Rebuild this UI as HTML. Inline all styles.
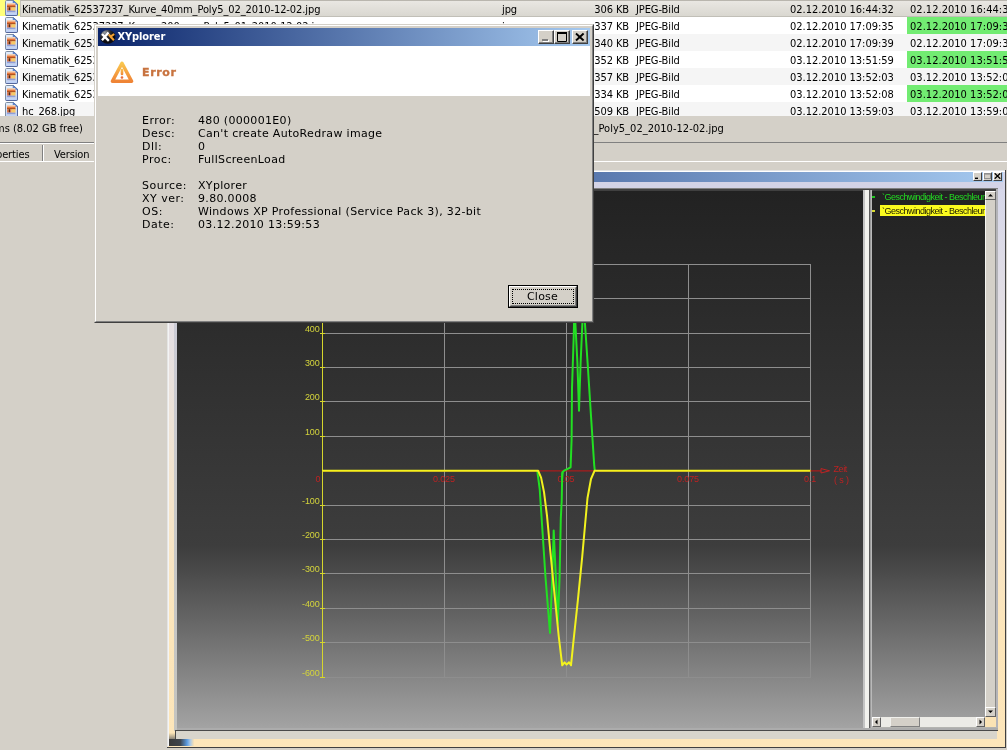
<!DOCTYPE html>
<html lang="en">
<head>
<meta charset="utf-8">
<title>XYplorer Error</title>
<style>
*{box-sizing:border-box;margin:0;padding:0}
html,body{width:1007px;height:750px;overflow:hidden}
body{background:#d4d0c8;font-family:"DejaVu Sans Condensed","Liberation Sans",sans-serif;letter-spacing:-0.13px;font-size:11px;color:#000;position:relative}
#root{position:absolute;left:0;top:0;width:1007px;height:750px;overflow:hidden;will-change:transform;background:#d4d0c8}
.abs{position:absolute}
/* ---------- file list ---------- */
#list{position:absolute;left:0;top:0;width:1007px;height:116px;background:#fff;overflow:hidden}
.row{position:absolute;left:0;width:1007px;height:17px;line-height:17px;white-space:nowrap}
.row.alt{background:linear-gradient(90deg,#fff 20px,#f5f5f5 20px)}
.row span{position:absolute;top:1px;height:17px;line-height:17px;font-size:11px;letter-spacing:-0.09px}
.row .ico{position:absolute;left:5px;top:0;width:13px;height:16px}
.c-name{left:22px}
.k{font-weight:normal;letter-spacing:-0.27px}
.c-ext{left:502px}
.c-size{left:560px;width:69px;text-align:right}
.c-type{left:636px}
.c-d1{left:790px;letter-spacing:-0.02px !important}
.c-d2{left:910px;letter-spacing:0.03px !important}
.grn{position:absolute;left:907px;top:0;width:100px;height:17px;background:#72ec72}
#sel{position:absolute;left:20px;top:0;width:987px;height:17px;background:linear-gradient(180deg,#e9e7e2,#d9d7d0);border-top:1px solid #b9b6ae;border-bottom:1px solid #c1bfb7;border-left:1px solid #c6c4bc}
#ymark{position:absolute;left:0;top:0;width:20px;height:16px;background:#ffff7a}
/* ---------- status / tabs ---------- */
.lbl{position:absolute;font-size:11px;line-height:13px;white-space:nowrap}
/* ---------- dialog ---------- */
#dlg{position:absolute;left:94px;top:24px;width:500px;height:299px;background:#d4d0c8;
 border:1px solid;border-color:#d4d0c8 #404040 #404040 #d4d0c8}
#dlg .in{position:absolute;left:0;top:0;right:0;bottom:0;border:1px solid;border-color:#fff #808080 #808080 #fff}
#ttl{position:absolute;left:3px;top:3px;width:492px;height:18px;background:linear-gradient(90deg,#0a246a 0%,#a6caf0 100%)}
#ttl .t{position:absolute;letter-spacing:-0.1px;left:19.5px;top:0;line-height:18px;color:#fff;font-weight:bold;font-size:11px}
.wb{position:absolute;top:2px;width:16px;height:14px;background:#d4d0c8;border:1px solid;border-color:#fff #404040 #404040 #fff;box-shadow:inset -1px -1px 0 #808080}
#hdr{position:absolute;left:3px;top:21px;width:492px;height:50px;background:#fff}
#hdr .e{position:absolute;letter-spacing:0.65px;-webkit-text-stroke:0.35px #c8733f;left:44px;top:20px;font-family:"DejaVu Sans","Liberation Sans",sans-serif;font-weight:bold;font-size:11px;line-height:13px;color:#c8733f}
.dt{position:absolute;font-family:"DejaVu Sans","Liberation Sans",sans-serif;font-size:11px;line-height:13px;white-space:nowrap;color:#000;letter-spacing:0.32px}
#btn{position:absolute;left:413px;top:260px;width:70px;height:23px;border:1px solid #000;background:#d4d0c8}
#btn .b1{position:absolute;left:0;top:0;right:0;bottom:0;border:1px solid;border-color:#fff #404040 #404040 #fff}
#btn .b2{position:absolute;left:1px;top:1px;right:1px;bottom:1px;border:1px solid;border-color:#d4d0c8 #808080 #808080 #d4d0c8}
#btn .f{position:absolute;left:3px;top:3px;right:3px;bottom:3px;border:1px dotted #000}
#btn .tx{position:absolute;left:0;right:1px;top:4px;letter-spacing:0.25px;text-align:center;font-family:"DejaVu Sans","Liberation Sans",sans-serif;font-size:11px;line-height:13px}
/* ---------- chart window ---------- */
#cw{position:absolute;left:167px;top:170px;width:839px;height:578px;background:linear-gradient(180deg,#d4d6ea 0%,#e6e0e2 30%,#f4e4cc 55%,#fce5b9 80%,#fde6ba 100%)}
#cttl{position:absolute;left:4px;top:2px;width:832px;height:10px;background:linear-gradient(90deg,#0a246a 0%,#a6caf0 100%)}
.cwb{position:absolute;top:2px;width:9px;height:9px;background:#d4d0c8;border:1px solid;border-color:#fff #404040 #404040 #fff;line-height:0}
.cwb svg{display:block}
.grad{background:linear-gradient(180deg,#222222 0px,#2c2c2c 130px,#383838 290px,#3d3d3d 355px,#474747 375px,#a3a3a3 537px)}
.lg{position:absolute;width:103px;overflow:hidden;white-space:nowrap;font-family:"Liberation Sans",sans-serif;font-size:9px;line-height:11px;letter-spacing:-0.5px}
.sb{position:absolute;background:#d4d0c8;border:1px solid;border-color:#fff #606060 #606060 #fff;line-height:0}
.sb svg{display:block}
</style>
</head>
<body>
<div id="root">

<!-- ================= FILE LIST ================= -->
<svg width="0" height="0" style="position:absolute"><defs>
<linearGradient id="pg" x1="0" y1="0" x2="0" y2="1"><stop offset="0" stop-color="#e4effd"/><stop offset="1" stop-color="#bccff5"/></linearGradient></defs></svg>
<div id="list">
<div class="row" style="top:0px"><div id="ymark"></div><div id="sel"></div><svg class="ico" viewBox="0 0 13 16"><path d="M0.5 1.6 Q0.5 0.5 1.6 0.5 H8.4 L12.5 4.2 V14.4 Q12.5 15.5 11.4 15.5 H1.6 Q0.5 15.5 0.5 14.4 Z" fill="url(#pg)" stroke="#7d8da2" stroke-width="1"/><path d="M12.5 4.2 V14.4 Q12.5 15.5 11.4 15.5 H1.6 Q0.9 15.5 0.6 15" fill="none" stroke="#55679c" stroke-width="1"/><path d="M8.2 0.6 V4.3 H12.4 Z" fill="#5f8edb" stroke="#4a6cb4" stroke-width="0.7"/><rect x="2" y="3" width="8.4" height="9.2" fill="#f3d2b6"/><rect x="2" y="4.6" width="8.4" height="2.6" fill="#e8763a"/><rect x="2" y="6.4" width="8.4" height="0.9" fill="#8c3c12"/><rect x="2" y="7.3" width="4.4" height="3.4" fill="#d97a52"/><rect x="6.4" y="7.3" width="4" height="3.4" fill="#f8c964"/><rect x="3.8" y="7.3" width="1.1" height="3" fill="#3c2212"/><rect x="2" y="10.6" width="8.4" height="1.6" fill="#8d9edb"/></svg><span class="c-name"><b class="k">Kinematik_</b>62537237_Kurve_40mm_Poly5_02_2010-12-02.jpg</span><span class="c-ext">jpg</span><span class="c-size">306 KB</span><span class="c-type">JPEG-Bild</span><span class="c-d1">02.12.2010 16:44:32</span><span class="c-d2">02.12.2010 16:44:32</span></div>
<div class="row" style="top:17px"><div class="grn"></div><svg class="ico" viewBox="0 0 13 16"><path d="M0.5 1.6 Q0.5 0.5 1.6 0.5 H8.4 L12.5 4.2 V14.4 Q12.5 15.5 11.4 15.5 H1.6 Q0.5 15.5 0.5 14.4 Z" fill="url(#pg)" stroke="#7d8da2" stroke-width="1"/><path d="M12.5 4.2 V14.4 Q12.5 15.5 11.4 15.5 H1.6 Q0.9 15.5 0.6 15" fill="none" stroke="#55679c" stroke-width="1"/><path d="M8.2 0.6 V4.3 H12.4 Z" fill="#5f8edb" stroke="#4a6cb4" stroke-width="0.7"/><rect x="2" y="3" width="8.4" height="9.2" fill="#f3d2b6"/><rect x="2" y="4.6" width="8.4" height="2.6" fill="#e8763a"/><rect x="2" y="6.4" width="8.4" height="0.9" fill="#8c3c12"/><rect x="2" y="7.3" width="4.4" height="3.4" fill="#d97a52"/><rect x="6.4" y="7.3" width="4" height="3.4" fill="#f8c964"/><rect x="3.8" y="7.3" width="1.1" height="3" fill="#3c2212"/><rect x="2" y="10.6" width="8.4" height="1.6" fill="#8d9edb"/></svg><span class="c-name"><b class="k">Kinematik_</b>62537237_Kurve_200mm_Poly5_01_2010-12-02.jpg</span><span class="c-ext">jpg</span><span class="c-size">337 KB</span><span class="c-type">JPEG-Bild</span><span class="c-d1">02.12.2010 17:09:35</span><span class="c-d2">02.12.2010 17:09:35</span></div>
<div class="row alt" style="top:34px"><svg class="ico" viewBox="0 0 13 16"><path d="M0.5 1.6 Q0.5 0.5 1.6 0.5 H8.4 L12.5 4.2 V14.4 Q12.5 15.5 11.4 15.5 H1.6 Q0.5 15.5 0.5 14.4 Z" fill="url(#pg)" stroke="#7d8da2" stroke-width="1"/><path d="M12.5 4.2 V14.4 Q12.5 15.5 11.4 15.5 H1.6 Q0.9 15.5 0.6 15" fill="none" stroke="#55679c" stroke-width="1"/><path d="M8.2 0.6 V4.3 H12.4 Z" fill="#5f8edb" stroke="#4a6cb4" stroke-width="0.7"/><rect x="2" y="3" width="8.4" height="9.2" fill="#f3d2b6"/><rect x="2" y="4.6" width="8.4" height="2.6" fill="#e8763a"/><rect x="2" y="6.4" width="8.4" height="0.9" fill="#8c3c12"/><rect x="2" y="7.3" width="4.4" height="3.4" fill="#d97a52"/><rect x="6.4" y="7.3" width="4" height="3.4" fill="#f8c964"/><rect x="3.8" y="7.3" width="1.1" height="3" fill="#3c2212"/><rect x="2" y="10.6" width="8.4" height="1.6" fill="#8d9edb"/></svg><span class="c-name"><b class="k">Kinematik_</b>62537237_Kurve_200mm_Poly5_02_2010-12-02.jpg</span><span class="c-ext">jpg</span><span class="c-size">340 KB</span><span class="c-type">JPEG-Bild</span><span class="c-d1">02.12.2010 17:09:39</span><span class="c-d2">02.12.2010 17:09:39</span></div>
<div class="row" style="top:51px"><div class="grn"></div><svg class="ico" viewBox="0 0 13 16"><path d="M0.5 1.6 Q0.5 0.5 1.6 0.5 H8.4 L12.5 4.2 V14.4 Q12.5 15.5 11.4 15.5 H1.6 Q0.5 15.5 0.5 14.4 Z" fill="url(#pg)" stroke="#7d8da2" stroke-width="1"/><path d="M12.5 4.2 V14.4 Q12.5 15.5 11.4 15.5 H1.6 Q0.9 15.5 0.6 15" fill="none" stroke="#55679c" stroke-width="1"/><path d="M8.2 0.6 V4.3 H12.4 Z" fill="#5f8edb" stroke="#4a6cb4" stroke-width="0.7"/><rect x="2" y="3" width="8.4" height="9.2" fill="#f3d2b6"/><rect x="2" y="4.6" width="8.4" height="2.6" fill="#e8763a"/><rect x="2" y="6.4" width="8.4" height="0.9" fill="#8c3c12"/><rect x="2" y="7.3" width="4.4" height="3.4" fill="#d97a52"/><rect x="6.4" y="7.3" width="4" height="3.4" fill="#f8c964"/><rect x="3.8" y="7.3" width="1.1" height="3" fill="#3c2212"/><rect x="2" y="10.6" width="8.4" height="1.6" fill="#8d9edb"/></svg><span class="c-name"><b class="k">Kinematik_</b>62537237_Kurve_200mm_Poly5_03_2010-12-03.jpg</span><span class="c-ext">jpg</span><span class="c-size">352 KB</span><span class="c-type">JPEG-Bild</span><span class="c-d1">03.12.2010 13:51:59</span><span class="c-d2">03.12.2010 13:51:59</span></div>
<div class="row alt" style="top:68px"><svg class="ico" viewBox="0 0 13 16"><path d="M0.5 1.6 Q0.5 0.5 1.6 0.5 H8.4 L12.5 4.2 V14.4 Q12.5 15.5 11.4 15.5 H1.6 Q0.5 15.5 0.5 14.4 Z" fill="url(#pg)" stroke="#7d8da2" stroke-width="1"/><path d="M12.5 4.2 V14.4 Q12.5 15.5 11.4 15.5 H1.6 Q0.9 15.5 0.6 15" fill="none" stroke="#55679c" stroke-width="1"/><path d="M8.2 0.6 V4.3 H12.4 Z" fill="#5f8edb" stroke="#4a6cb4" stroke-width="0.7"/><rect x="2" y="3" width="8.4" height="9.2" fill="#f3d2b6"/><rect x="2" y="4.6" width="8.4" height="2.6" fill="#e8763a"/><rect x="2" y="6.4" width="8.4" height="0.9" fill="#8c3c12"/><rect x="2" y="7.3" width="4.4" height="3.4" fill="#d97a52"/><rect x="6.4" y="7.3" width="4" height="3.4" fill="#f8c964"/><rect x="3.8" y="7.3" width="1.1" height="3" fill="#3c2212"/><rect x="2" y="10.6" width="8.4" height="1.6" fill="#8d9edb"/></svg><span class="c-name"><b class="k">Kinematik_</b>62537237_Kurve_200mm_Poly5_04_2010-12-03.jpg</span><span class="c-ext">jpg</span><span class="c-size">357 KB</span><span class="c-type">JPEG-Bild</span><span class="c-d1">03.12.2010 13:52:03</span><span class="c-d2">03.12.2010 13:52:03</span></div>
<div class="row" style="top:85px"><div class="grn"></div><svg class="ico" viewBox="0 0 13 16"><path d="M0.5 1.6 Q0.5 0.5 1.6 0.5 H8.4 L12.5 4.2 V14.4 Q12.5 15.5 11.4 15.5 H1.6 Q0.5 15.5 0.5 14.4 Z" fill="url(#pg)" stroke="#7d8da2" stroke-width="1"/><path d="M12.5 4.2 V14.4 Q12.5 15.5 11.4 15.5 H1.6 Q0.9 15.5 0.6 15" fill="none" stroke="#55679c" stroke-width="1"/><path d="M8.2 0.6 V4.3 H12.4 Z" fill="#5f8edb" stroke="#4a6cb4" stroke-width="0.7"/><rect x="2" y="3" width="8.4" height="9.2" fill="#f3d2b6"/><rect x="2" y="4.6" width="8.4" height="2.6" fill="#e8763a"/><rect x="2" y="6.4" width="8.4" height="0.9" fill="#8c3c12"/><rect x="2" y="7.3" width="4.4" height="3.4" fill="#d97a52"/><rect x="6.4" y="7.3" width="4" height="3.4" fill="#f8c964"/><rect x="3.8" y="7.3" width="1.1" height="3" fill="#3c2212"/><rect x="2" y="10.6" width="8.4" height="1.6" fill="#8d9edb"/></svg><span class="c-name"><b class="k">Kinematik_</b>62537237_Kurve_200mm_Poly5_05_2010-12-03.jpg</span><span class="c-ext">jpg</span><span class="c-size">334 KB</span><span class="c-type">JPEG-Bild</span><span class="c-d1">03.12.2010 13:52:08</span><span class="c-d2">03.12.2010 13:52:08</span></div>
<div class="row alt" style="top:102px"><svg class="ico" viewBox="0 0 13 16"><path d="M0.5 1.6 Q0.5 0.5 1.6 0.5 H8.4 L12.5 4.2 V14.4 Q12.5 15.5 11.4 15.5 H1.6 Q0.5 15.5 0.5 14.4 Z" fill="url(#pg)" stroke="#7d8da2" stroke-width="1"/><path d="M12.5 4.2 V14.4 Q12.5 15.5 11.4 15.5 H1.6 Q0.9 15.5 0.6 15" fill="none" stroke="#55679c" stroke-width="1"/><path d="M8.2 0.6 V4.3 H12.4 Z" fill="#5f8edb" stroke="#4a6cb4" stroke-width="0.7"/><rect x="2" y="3" width="8.4" height="9.2" fill="#f3d2b6"/><rect x="2" y="4.6" width="8.4" height="2.6" fill="#e8763a"/><rect x="2" y="6.4" width="8.4" height="0.9" fill="#8c3c12"/><rect x="2" y="7.3" width="4.4" height="3.4" fill="#d97a52"/><rect x="6.4" y="7.3" width="4" height="3.4" fill="#f8c964"/><rect x="3.8" y="7.3" width="1.1" height="3" fill="#3c2212"/><rect x="2" y="10.6" width="8.4" height="1.6" fill="#8d9edb"/></svg><span class="c-name">hc_268.jpg</span><span class="c-ext">jpg</span><span class="c-size">509 KB</span><span class="c-type">JPEG-Bild</span><span class="c-d1">03.12.2010 13:59:03</span><span class="c-d2">03.12.2010 13:59:03</span></div>
</div>

<!-- ================= STATUS / TABS ================= -->
<div class="lbl" style="left:-5px;top:122px;letter-spacing:0">ms (8.02 GB free)</div>
<div class="lbl" style="left:593.5px;top:122px;letter-spacing:0.02px">_Poly5_02_2010-12-02.jpg</div>
<div class="abs" style="left:0;top:142px;width:1007px;height:1px;background:#808080"></div>
<div class="abs" style="left:0;top:143px;width:94px;height:1px;background:#fff"></div>
<div class="abs" style="left:0;top:161px;width:1007px;height:1px;background:#fff"></div>
<div class="abs" style="left:42px;top:145px;width:1px;height:16px;background:#808080"></div>
<div class="abs" style="left:43px;top:145px;width:1px;height:16px;background:#fff"></div>
<div class="lbl" style="left:-4px;top:148px">perties</div>
<div class="lbl" style="left:54px;top:148px">Version</div>

<!-- ================= CHART WINDOW ================= -->
<div id="cw">
  <div class="abs" style="left:0;top:0;width:839px;height:1px;background:#e4e4e4"></div>
  <div class="abs" style="left:0;top:0;width:1px;height:578px;background:#e4e4e4"></div>
  <div class="abs" style="left:1px;top:1px;width:837px;height:1px;background:#fff"></div>
  <div class="abs" style="left:1px;top:1px;width:1px;height:575px;background:#f4f4f4"></div>
  <div class="abs" style="right:0;top:0;width:1px;height:578px;background:#404040"></div>
  <div class="abs" style="left:0;bottom:0;width:839px;height:1px;background:#404040"></div>
  <div class="abs" style="left:7px;top:0;width:3px;height:561px;background:linear-gradient(180deg,#d0d0e2,#c8c8c8 60%,#c4c4c0)"></div>
  <div id="cttl"></div>
  <div class="cwb" style="left:806px"><svg width="7" height="6" viewBox="0 0 7 6"><rect x="1" y="4.6" width="3" height="1.4" fill="#000"/></svg></div>
  <div class="cwb" style="left:816px"><svg width="7" height="6" viewBox="0 0 7 6"><rect x="0.5" y="0.5" width="6" height="5" fill="none" stroke="#909090"/><rect x="0" y="0" width="7" height="1.6" fill="#909090"/></svg></div>
  <div class="cwb" style="left:826px"><svg width="7" height="6" viewBox="0 0 7 6"><path d="M0.7 0.3 L6.3 5.7 M6.3 0.3 L0.7 5.7" stroke="#000" stroke-width="1.3"/></svg></div>
  <div class="abs" style="left:4px;top:12px;width:832px;height:7px;background:#d3d3e6"></div>
  <div class="abs" style="left:8px;top:18px;width:823px;height:1px;background:#808080"></div>
  <div class="abs" style="left:9px;top:19px;width:822px;height:2px;background:#404040"></div>
</div>
<!-- plot + legend backgrounds (absolute page coords) -->
<div class="abs grad" style="left:177px;top:191px;width:686px;height:538px"></div>
<div class="abs" style="left:863px;top:190px;width:2px;height:539px;background:#c4c4c4"></div>
<div class="abs" style="left:865px;top:190px;width:4px;height:539px;background:#f2f2ee"></div>
<div class="abs" style="left:869px;top:190px;width:1px;height:539px;background:#5c5c5c"></div>
<div class="abs" style="left:870px;top:190px;width:2px;height:539px;background:linear-gradient(90deg,#8c8c8c,#c8c8c8)"></div>
<div class="abs grad" style="left:872px;top:191px;width:113px;height:537px"></div>
<!-- legend -->
<div class="abs" style="left:872px;top:196px;width:3px;height:2px;background:#20c820"></div>
<div class="abs" style="left:872px;top:210px;width:3px;height:2px;background:#d8d830"></div>
<div class="abs" style="left:880px;top:205px;width:105px;height:11px;background:#fbfb1e"></div>
<div class="lg" style="left:882px;top:192px;color:#22d822">`Geschwindigkeit - Beschleunigung</div>
<div class="lg" style="left:882px;top:206px;color:#202000">`Geschwindigkeit - Beschleunigung</div>
<!-- v scrollbar -->
<div class="abs" style="left:985px;top:191px;width:11px;height:526px;background:#d4d0c8;border-left:1px solid #f4f4f0"></div>
<div class="sb" style="left:985px;top:191px;width:11px;height:9px"><svg width="9" height="7" viewBox="0 0 9 7"><path d="M2 4.5 L4.5 2 L7 4.5 Z" fill="#000"/></svg></div>
<div class="sb" style="left:985px;top:707px;width:11px;height:10px"><svg width="9" height="8" viewBox="0 0 9 8"><path d="M2 2.5 L4.5 5 L7 2.5 Z" fill="#000"/></svg></div>
<!-- h scrollbar -->
<div class="abs" style="left:872px;top:717px;width:124px;height:11px;background:#b4b4b0"></div><div class="abs" style="left:872px;top:717px;width:113px;height:10px;background:#ecebe6"></div>
<div class="sb" style="left:872px;top:717px;width:9px;height:10px"><svg width="7" height="8" viewBox="0 0 7 8"><path d="M4.5 1.5 L2 4 L4.5 6.5 Z" fill="#000"/></svg></div>
<div class="sb" style="left:976px;top:717px;width:9px;height:10px"><svg width="7" height="8" viewBox="0 0 7 8"><path d="M2.5 1.5 L5 4 L2.5 6.5 Z" fill="#000"/></svg></div>
<div class="abs" style="left:890px;top:717px;width:30px;height:10px;background:#d4d0c8;border:1px solid;border-color:#f0f0ec #808080 #808080 #f0f0ec"></div>
<div class="abs" style="left:985px;top:717px;width:11px;height:10px;background:#fbe3b4"></div>
<div class="abs" style="left:995px;top:200px;width:1px;height:507px;background:#8a8a88"></div><div class="abs" style="left:996px;top:189px;width:2px;height:541px;background:#b4b4b8"></div>
<!-- bottom -->
<div class="abs" style="left:177px;top:728px;width:821px;height:2px;background:#acacac"></div>
<div class="abs" style="left:175px;top:730px;width:823px;height:1px;background:#4a4a4a"></div>
<div class="abs" style="left:175px;top:730px;width:1px;height:9px;background:#4a4a4a"></div>
<div class="abs" style="left:176px;top:731px;width:821px;height:8px;background:#d8d5cc"></div>
<div class="abs" style="left:169px;top:739px;width:25px;height:7px;background:linear-gradient(90deg,#3a3a3a 0%,#3e444c 45%,#5b9be0 72%,#a8c8e8 85%,#fbe2b2 100%)"></div>
<div class="abs" style="left:169px;top:733px;width:6px;height:6px;background:linear-gradient(180deg,#fbe4b6,#8a8478)"></div>
<svg class="abs" style="left:177px;top:191px" width="686" height="537" viewBox="0 0 686 537" font-family="'Liberation Sans',sans-serif" font-size="9">
 <g stroke="#8e8e8e" stroke-width="1" shape-rendering="crispEdges"><line x1="145" y1="486.5" x2="634" y2="486.5"/><line x1="145" y1="451.5" x2="634" y2="451.5"/><line x1="145" y1="417.5" x2="634" y2="417.5"/><line x1="145" y1="382.5" x2="634" y2="382.5"/><line x1="145" y1="348.5" x2="634" y2="348.5"/><line x1="145" y1="314.5" x2="634" y2="314.5"/><line x1="145" y1="245.5" x2="634" y2="245.5"/><line x1="145" y1="210.5" x2="634" y2="210.5"/><line x1="145" y1="176.5" x2="634" y2="176.5"/><line x1="145" y1="142.5" x2="634" y2="142.5"/><line x1="145" y1="107.5" x2="634" y2="107.5"/><line x1="145" y1="73.5" x2="634" y2="73.5"/><line x1="267.5" y1="73" x2="267.5" y2="486"/><line x1="389.5" y1="73" x2="389.5" y2="486"/><line x1="511.5" y1="73" x2="511.5" y2="486"/><line x1="633.5" y1="73" x2="633.5" y2="486"/></g>
 <line x1="145.5" y1="73" x2="145.5" y2="486" stroke="#d6d62c" stroke-width="1" shape-rendering="crispEdges"/>
 <g fill="#d4d43c"><text x="142.6" y="72.2" text-anchor="end">600</text><line x1="143" y1="73.5" x2="148" y2="73.5" stroke="#d6d62c" stroke-width="1" shape-rendering="crispEdges"/><text x="142.6" y="106.2" text-anchor="end">500</text><line x1="143" y1="107.5" x2="148" y2="107.5" stroke="#d6d62c" stroke-width="1" shape-rendering="crispEdges"/><text x="142.6" y="141.2" text-anchor="end">400</text><line x1="143" y1="142.5" x2="148" y2="142.5" stroke="#d6d62c" stroke-width="1" shape-rendering="crispEdges"/><text x="142.6" y="175.2" text-anchor="end">300</text><line x1="143" y1="176.5" x2="148" y2="176.5" stroke="#d6d62c" stroke-width="1" shape-rendering="crispEdges"/><text x="142.6" y="209.2" text-anchor="end">200</text><line x1="143" y1="210.5" x2="148" y2="210.5" stroke="#d6d62c" stroke-width="1" shape-rendering="crispEdges"/><text x="142.6" y="244.2" text-anchor="end">100</text><line x1="143" y1="245.5" x2="148" y2="245.5" stroke="#d6d62c" stroke-width="1" shape-rendering="crispEdges"/><text x="142.6" y="313.2" text-anchor="end">-100</text><line x1="143" y1="314.5" x2="148" y2="314.5" stroke="#d6d62c" stroke-width="1" shape-rendering="crispEdges"/><text x="142.6" y="347.2" text-anchor="end">-200</text><line x1="143" y1="348.5" x2="148" y2="348.5" stroke="#d6d62c" stroke-width="1" shape-rendering="crispEdges"/><text x="142.6" y="381.2" text-anchor="end">-300</text><line x1="143" y1="382.5" x2="148" y2="382.5" stroke="#d6d62c" stroke-width="1" shape-rendering="crispEdges"/><text x="142.6" y="416.2" text-anchor="end">-400</text><line x1="143" y1="417.5" x2="148" y2="417.5" stroke="#d6d62c" stroke-width="1" shape-rendering="crispEdges"/><text x="142.6" y="450.2" text-anchor="end">-500</text><line x1="143" y1="451.5" x2="148" y2="451.5" stroke="#d6d62c" stroke-width="1" shape-rendering="crispEdges"/><text x="142.6" y="485.2" text-anchor="end">-600</text><line x1="143" y1="486.5" x2="148" y2="486.5" stroke="#d6d62c" stroke-width="1" shape-rendering="crispEdges"/></g>
 <line x1="145" y1="279.8" x2="644" y2="279.8" stroke="#a81c1c" stroke-width="1.2"/>
 <path d="M644 277.6 L652.5 279.8 L644 282.0 Z" fill="none" stroke="#c02222" stroke-width="1"/>
 <g fill="#be2222"><text x="140.9" y="291.2" text-anchor="middle">0</text><text x="266.9" y="291.2" text-anchor="middle">0.025</text><text x="389.0" y="291.2" text-anchor="middle">0.05</text><text x="511.0" y="291.2" text-anchor="middle">0.075</text><text x="633.0" y="291.2" text-anchor="middle">0.1</text><text x="656.5" y="280.8" letter-spacing="-0.4">Zeit</text><text x="657" y="292">( s )</text></g>
 <path d="M360.3 279.8 L362.7 298.0 L365.6 342.0 L368.5 386.3 L373.0 442.0 L375.0 392.0 L376.7 339.4 L378.8 386.0 L380.8 433.0 L382.6 386.0 L383.8 327.6 L384.7 310.0 L385.2 283.7 L385.6 281.0" fill="none" stroke="#22e022" stroke-width="2" stroke-linejoin="round"/>
 <path d="M385.0 289.0 L385.6 281.0 L387.6 279.3 L393.6 276.3 L394.6 248.5 L395.0 197.0 L396.7 146.0 L397.6 109.0 L398.4 133.0 L400.4 171.7 L402.0 219.7 L403.6 171.7 L405.6 127.0 L406.5 109.0 L408.0 133.0 L410.6 171.7 L414.0 225.0 L417.2 274.0 L417.8 279.6" fill="none" stroke="#22e022" stroke-width="2" stroke-linejoin="round"/>
 <path d="M145.0 279.8 L361.2 279.8 L364.1 286.6 L367.0 301.0 L370.0 324.7 L373.0 357.0 L377.3 401.0 L381.7 445.0 L385.2 474.3 L387.6 471.3 L389.6 473.6 L392.0 471.3 L394.0 474.3 L396.4 450.8 L400.8 409.8 L405.2 365.8 L408.1 333.5 L410.5 307.0 L414.0 288.0 L417.5 279.8 L633.5 279.8" fill="none" stroke="#f2f21e" stroke-width="2" stroke-linejoin="round"/>
</svg>

<!-- ================= DIALOG ================= -->
<div id="dlg"><div class="in"></div>
  <div id="ttl">
    <svg class="abs" style="left:2px;top:2px" width="16" height="14" viewBox="0 0 16 14">
      <defs><radialGradient id="xg" cx="0.3" cy="0.18" r="0.6"><stop offset="0" stop-color="#9aa0a8"/><stop offset="0.6" stop-color="#2a2c32"/><stop offset="1" stop-color="#0c0c10"/></radialGradient></defs>
      <ellipse cx="7.8" cy="6.9" rx="7.7" ry="6.8" fill="url(#xg)"/>
      <path d="M2 4 L8.8 10.9 M8.5 2.6 L2 10.3" stroke="#fff" stroke-width="2.3" fill="none"/>
      <path d="M8.8 4.3 L10.6 6.7 L14.2 4 M10.6 6.7 L13.9 10.3" stroke="#f2a032" stroke-width="2.1" fill="none"/>
    </svg>
    <span class="t">XYplorer</span>
    <div class="wb" style="left:440px"><svg width="14" height="12" viewBox="0 0 14 12"><rect x="4" y="9" width="6" height="2" fill="#fff"/><rect x="3" y="8" width="6" height="2" fill="#808080"/></svg></div>
    <div class="wb" style="left:456px"><svg width="14" height="12" viewBox="0 0 14 12"><path d="M2.5 2 H11.5 V10.5 H2.5 Z" fill="none" stroke="#000" stroke-width="1"/><rect x="2" y="1" width="10" height="2" fill="#000"/></svg></div>
    <div class="wb" style="left:474px"><svg width="14" height="12" viewBox="0 0 14 12"><path d="M3 2.5 L10.6 9.5 M10.6 2.5 L3 9.5" stroke="#000" stroke-width="1.9" fill="none"/></svg></div>
  </div>
  <div id="hdr">
    <svg class="abs" style="left:11px;top:14px" width="26" height="26" viewBox="0 0 26 26">
      <defs><linearGradient id="wg" x1="0" y1="0" x2="0" y2="1"><stop offset="0" stop-color="#f9c64e"/><stop offset="0.55" stop-color="#f5a040"/><stop offset="1" stop-color="#ef8436"/></linearGradient></defs>
      <path d="M13 3.3 L22.6 21.3 H3.4 Z" fill="#fff" stroke="url(#wg)" stroke-width="3.5" stroke-linejoin="round"/>
      <rect x="11.7" y="8.8" width="2.6" height="6.4" rx="1.2" fill="url(#wg)"/>
      <rect x="11.7" y="16.3" width="2.6" height="2.4" rx="1.2" fill="#ea6c3a"/>
    </svg>
    <span class="e">Error</span>
  </div>
  <div class="dt" style="left:47px;top:89px;letter-spacing:0.5px">Error:<br>Desc:<br>Dll:<br>Proc:<br><br>Source:<br>XY ver:<br>OS:<br>Date:</div>
  <div class="dt" style="left:103px;top:89px">480 (000001E0)<br>Can't create AutoRedraw image<br>0<br>FullScreenLoad<br><br>XYplorer<br>9.80.0008<br>Windows XP Professional (Service Pack 3), 32-bit<br>03.12.2010 13:59:53</div>
  <div id="btn"><div class="b1"></div><div class="b2"></div><div class="f"></div><div class="tx">Close</div></div>
</div>

</div>
</body>
</html>
